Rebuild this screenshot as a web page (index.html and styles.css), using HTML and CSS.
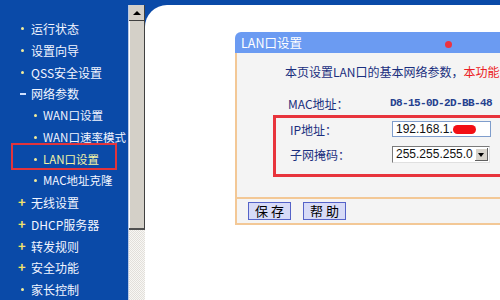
FILE: index.html
```html
<!DOCTYPE html>
<html lang="zh-CN">
<head>
    <meta charset="UTF-8">
    <title>LAN口设置</title>
    <link rel="stylesheet" href="styles.css">
</head>
<body>
    <div class="frame">
        <nav class="menu">
            <ul>
                <li class="item dot">运行状态</li>
                <li class="item dot">设置向导</li>
                <li class="item dot">QSS安全设置</li>
                <li class="item minus">网络参数</li>
                <li class="item sub">WAN口设置</li>
                <li class="item sub">WAN口速率模式</li>
                <li class="item sub active">LAN口设置</li>
                <li class="item sub">MAC地址克隆</li>
                <li class="item plus">无线设置</li>
                <li class="item plus">DHCP服务器</li>
                <li class="item plus">转发规则</li>
                <li class="item plus">安全功能</li>
                <li class="item dot">家长控制</li>
            </ul>
        </nav>
        <div class="scrollbar">
            <div class="sb-up"><span class="sb-arrow"></span></div>
            <div class="sb-thumb"></div>
            <div class="sb-track"></div>
        </div>
        <main class="main">
            <div class="page">
                <div class="panel">
                    <div class="panel-head">LAN口设置<span class="red-dot"></span></div>
                    <div class="panel-body">
                        <p class="intro">本页设置LAN口的基本网络参数，<span class="warn">本功能会</span></p>
                        <div class="row mac-row">
                            <span class="label">MAC地址：</span>
                            <span class="mac">D8-15-0D-2D-BB-48</span>
                        </div>
                        <div class="mark">
                            <div class="row">
                                <span class="label">IP地址：</span>
                                <div class="input">192.168.1.<span class="scribble"></span></div>
                            </div>
                            <div class="row row-mask">
                                <span class="label">子网掩码：</span>
                                <div class="select">255.255.255.0<span class="drop"></span></div>
                            </div>
                        </div>
                    </div>
                    <div class="panel-foot">
                        <button class="btn">保 存</button>
                        <button class="btn">帮 助</button>
                    </div>
                </div>
            </div>
        </main>
    </div>
</body>
</html>
```

FILE: styles.css
```css
/* router admin page: left menu + LAN settings panel */
html, body {
    margin: 0;
    padding: 0;
    height: 100%;
    overflow: hidden;
}

body {
    font-family: "Noto Sans CJK SC", "Liberation Sans", sans-serif;
    font-size: 12px;
}

.frame {
    display: flex;
    height: 300px;
    background-color: #0a4aa8;
}

/* left menu */
.menu {
    width: 128px;
    flex: none;
}

.menu ul {
    list-style: none;
    margin: 0;
    padding: 18px 0 0 0;
}

.item {
    position: relative;
    height: 21.75px;
    line-height: 21.75px;
    padding-left: 31px;
    color: #f2f5ff;
    white-space: nowrap;
}

.item::before {
    position: absolute;
    content: "";
}

.dot::before {
    left: 21px;
    top: 9px;
    width: 3px;
    height: 3px;
    border-radius: 50%;
    background-color: #f2ec9a;
}

.plus::before {
    content: "+";
    left: 18px;
    top: -1px;
    color: #f4e36a;
    font-weight: bold;
    font-size: 13px;
}

.minus::before {
    left: 20px;
    top: 10px;
    width: 6px;
    height: 2px;
    background-color: #cfe0ff;
}

.sub {
    padding-left: 43px;
    font-size: 11.5px;
}

.sub::before {
    left: 34px;
    top: 9px;
    width: 3px;
    height: 3px;
    border-radius: 50%;
    background-color: #f2ec9a;
}

.active {
    color: #f4f4a4;
}

/* red annotation box round the current item */
.active::after {
    position: absolute;
    content: "";
    left: 11px;
    right: 11px;
    top: -6px;
    bottom: 0;
    border: 2px solid #e2343c;
}

/* fake windows scrollbar */
.scrollbar {
    width: 17px;
    flex: none;
    margin-top: 5px;
    display: flex;
    flex-direction: column;
    border-left: 1px solid #b9c8e4;
    box-sizing: border-box;
}

.sb-up {
    height: 15px;
    background-color: #d4d0c8;
    border-right: 1px solid #404040;
    border-bottom: 1px solid #404040;
    display: flex;
    justify-content: center;
    align-items: center;
}

.sb-arrow {
    width: 0;
    height: 0;
    border-left: 4px solid transparent;
    border-right: 4px solid transparent;
    border-bottom: 4px solid #000;
}

.sb-thumb {
    height: 207px;
    background-color: #d4d0c8;
    border-right: 1px solid #404040;
    border-bottom: 2px solid #505050;
    box-shadow: inset 1px 0 0 #ffffff;
}

.sb-track {
    flex: 1;
    background-color: #f0eeea;
    background-image: repeating-conic-gradient(#e2dfda 0 25%, #f8f7f4 0 50%);
    background-size: 2px 2px;
}

/* right content */
.main {
    flex: 1;
    padding-top: 5px;
    overflow: hidden;
}

.page {
    height: 100%;
    background-color: #fff;
    border-top-left-radius: 22px;
    padding-top: 27px;
    padding-left: 90px;
    box-sizing: border-box;
}

.panel {
    width: 330px;
}

.panel-head {
    height: 21px;
    line-height: 21px;
    padding-left: 6px;
    background-color: #6b9bf2;
    border-top-left-radius: 6px;
    color: #fff;
    font-size: 12.5px;
}

.red-dot {
    display: inline-block;
    width: 7px;
    height: 7px;
    margin-left: 143px;
    border-radius: 50%;
    background-color: #ee3340;
    vertical-align: middle;
}

.panel-body {
    background-color: #f4f4f4;
    border-left: 2px solid #f3c896;
    padding: 11px 0 20px 0;
}

.intro {
    margin: 0 0 0 48px;
    line-height: 16px;
    color: #1a2f7e;
    white-space: nowrap;
}

.warn {
    color: #ec1c24;
}

.row {
    display: flex;
    align-items: center;
    height: 16px;
}

.label {
    width: 102px;
    flex: none;
    color: #1a2f7e;
}

.mac-row {
    margin: 15px 0 0 51px;
}

.mac {
    font-family: "Liberation Mono", monospace;
    font-size: 11px;
    letter-spacing: -0.6px;
    font-weight: bold;
    color: #25408e;
}

.mark {
    margin: 4px 0 0 36px;
    border: 3px solid #e8343c;
    border-right: none;
    padding: 3px 0 11px 14px;
}

.row-mask {
    margin-top: 9px;
    height: 17px;
}

.input {
    width: 94px;
    height: 14px;
    line-height: 14px;
    padding-left: 3px;
    border: 1px solid #7f9dcc;
    background-color: #fff;
    font-family: "Liberation Sans", sans-serif;
    font-size: 12px;
    color: #111;
    display: flex;
    align-items: center;
}

.scribble {
    width: 23px;
    height: 9px;
    border-radius: 5px;
    background-color: #f20f14;
}

.select {
    width: 93px;
    height: 13px;
    line-height: 13px;
    padding: 1px 0 1px 3px;
    border: 1px solid #7a7a7a;
    border-right-color: #e0e0e0;
    border-bottom-color: #e0e0e0;
    background-color: #fff;
    font-family: "Liberation Sans", sans-serif;
    font-size: 12px;
    color: #111;
    display: flex;
    justify-content: space-between;
}

.drop {
    position: relative;
    width: 13px;
    height: 13px;
    margin-right: 1px;
    background-color: #d8d4cc;
    box-shadow: inset -1px -1px 0 #606060, inset 1px 1px 0 #fff;
}

.drop::after {
    position: absolute;
    content: "";
    left: 3px;
    top: 5px;
    border-left: 3.5px solid transparent;
    border-right: 3.5px solid transparent;
    border-top: 4px solid #000;
}

.panel-foot {
    background-color: #f4f4f4;
    border-left: 2px solid #f3c896;
    border-top: 2px solid #f3c896;
    border-bottom: 2px solid #f3c896;
    height: 24px;
    display: flex;
    align-items: center;
    gap: 12px;
    padding-left: 11px;
}

.btn {
    height: 18px;
    padding: 0 6px;
    margin: 0;
    border: 1px solid #5563c8;
    background-color: #d7dbf7;
    font-family: "Noto Sans CJK SC", sans-serif;
    font-size: 13px;
    line-height: 16px;
    color: #000;
    width: 43px;
}
```
